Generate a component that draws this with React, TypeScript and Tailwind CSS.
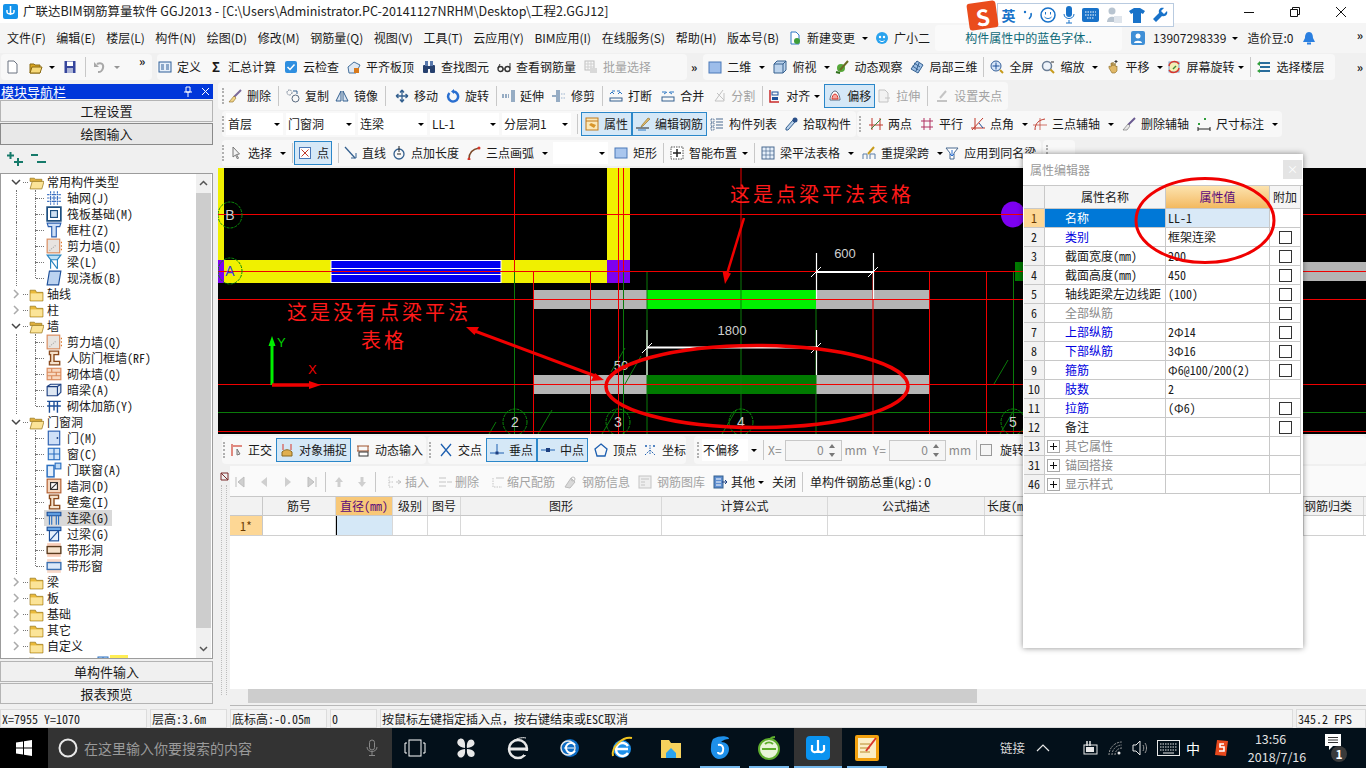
import type { ReactNode } from "react";
import clsx from "clsx";
import { twMerge } from "tailwind-merge";

const cx = (...a: Parameters<typeof clsx>) => twMerge(clsx(...a));

const ui = "[font-family:'Noto_Sans_CJK_SC','Liberation_Sans',sans-serif]";
const sim = "[font-family:'Noto_Sans_Mono_CJK_SC','Noto_Sans_CJK_SC',monospace]";

const ICONS: Record<string, ReactNode> = {
  new: <path d="M3 1h6l3 3v9H3z" fill="#fff" stroke="#6b7280" />,
  open: <><path d="M1 4h4l1 1h5v8H1z" fill="#d9a520" stroke="#8a6a14" /><path d="M3 7h10l-2 6H1z" fill="#f6d97a" stroke="#8a6a14" /></>,
  save: <><rect x="1.500" y="1" width="11" height="12" fill="#35459c" /><rect x="4" y="1.500" width="6" height="4.500" fill="#fff" /><rect x="4" y="8" width="6" height="5" fill="#aeb6d8" /></>,
  undo: <><path d="M5 4c4-2 7 0 6 4s-3 4-5 4" fill="none" stroke="#a8a8a8" strokeWidth="2" /><path d="M2 2v5h5z" fill="#a8a8a8" /></>,
  define: <><rect x="1" y="2" width="12" height="10" fill="#e7f0fa" stroke="#2f5f98" /><path d="M3 5h3M3 7h3M3 9h3M8 5h3M8 7h3M8 9h3" stroke="#2f5f98" /></>,
  cloud: <><rect x="1" y="1" width="12" height="12" rx="2" fill="#2f8fe0" /><path d="M3.500 7l2.500 2.500 4.500-5" fill="none" stroke="#fff" strokeWidth="1.500" /></>,
  flat: <><path d="M1 7l6-5 6 3-4 8H2z" fill="#dfe8f3" stroke="#44709c" /><rect x="7" y="8" width="5" height="5" fill="#d97a1c" /></>,
  binoc: <><rect x="1" y="5" width="5" height="8" rx="1" fill="#26406e" /><rect x="8" y="5" width="5" height="8" rx="1" fill="#26406e" /><rect x="3" y="1" width="3" height="5" fill="#5979ad" /><rect x="8" y="1" width="3" height="5" fill="#5979ad" /><rect x="6" y="6" width="2" height="3" fill="#26406e" /></>,
  glass: <><circle cx="3.500" cy="9" r="2.500" fill="none" stroke="#333" strokeWidth="1.400" /><circle cx="10.500" cy="9" r="2.500" fill="none" stroke="#333" strokeWidth="1.400" /><path d="M1 8l2-4M13 8V3M6 9h2" stroke="#333" /></>,
  batch: <><rect x="1" y="1" width="9" height="9" fill="none" stroke="#bdbdbd" /><path d="M1 4h9M1 7h9M4 1v9M7 1v9" stroke="#cfcfcf" /><rect x="6" y="8" width="7" height="5" fill="#d9d9d9" /></>,
  two: <rect x="1" y="2" width="12" height="11" fill="#9dbdea" stroke="#4a78b8" />,
  top: <><path d="M1 4l3-3h9v9l-3 3H1z" fill="#bcd3ec" stroke="#36618f" /><path d="M1 4h9v9M10 4l3-3" fill="none" stroke="#36618f" /></>,
  orbit: <><circle cx="6" cy="8" r="4" fill="#57a83a" /><path d="M5 10L13 1" stroke="#6a6a22" strokeWidth="2" /><path d="M1 12l4 1" stroke="#2f6f1c" strokeWidth="2" /></>,
  local: <><path d="M7 1l6 4-5 8-7-4z" fill="#9fc0e6" stroke="#34608f" /><path d="M4 3l6 4M2.500 6l6 4M9 3l-3 8" stroke="#34608f" /></>,
  full: <><circle cx="6" cy="6" r="5" fill="#d7e6f8" stroke="#345f9a" /><path d="M6 2.500v7M2.500 6h7" stroke="#1d4f99" /><path d="M10 10l3 3" stroke="#c79b1b" strokeWidth="2" /></>,
  zoom: <><circle cx="6" cy="6" r="4.500" fill="#eef3fa" stroke="#6b7e96" strokeWidth="1.500" /><path d="M9.500 9.500l3.500 3.500" stroke="#c79b1b" strokeWidth="2" /><path d="M10 2h3" stroke="#333" /></>,
  pan: <><path d="M3 8V6l2 1V3h1v3l1-4 1 4 1-3 1 4 1-1v5l-2 2H6z" fill="#e0b868" stroke="#8a6a22" strokeWidth=".6" /><path d="M10 0v3M8.500 1.500h3" stroke="#333" /></>,
  spin: <><rect x="2" y="2" width="10" height="10" fill="#f4efb5" stroke="#7fa4cf" /><path d="M2 6a5.500 5.500 0 0 1 10-2M12 8a5.500 5.500 0 0 1-10 2" fill="none" stroke="#d9362b" strokeWidth="1.500" /><path d="M6 9l3-3" stroke="#3a8a3a" strokeWidth="1.500" /></>,
  floor: <><path d="M3 3h10M3 7h10M3 11h10" stroke="#2a6d9c" strokeWidth="2" /><path d="M3 1L0 4l3 2z" fill="#2e9e3a" /><path d="M3 9l-3 2 3 2z" fill="#2e9e3a" /></>,
  broom: <><path d="M13 1L6 8" stroke="#7a6a9a" strokeWidth="2" /><path d="M6 7l2 2-3 4-4 0z" fill="#f1d488" stroke="#8a6a22" strokeWidth=".6" /></>,
  copy: <><circle cx="3.500" cy="3.500" r="2.500" fill="none" stroke="#5a6b80" strokeDasharray="1.500 1" /><circle cx="9.500" cy="9.500" r="3.500" fill="none" stroke="#5a6b80" /><path d="M7 2h4v3" fill="none" stroke="#34608f" /></>,
  mirror: <path d="M6 2v10H1zM8 2v10h5z" fill="#d9e4f1" stroke="#34608f" />,
  move: <path d="M7 1v12M1 7h12M7 1L5 3.500M7 1l2 2.500M7 13l-2-2.500M7 13l2-2.500M1 7l2.500-2M1 7l2.500 2M13 7l-2.500-2M13 7l-2.500 2" fill="none" stroke="#34608f" strokeWidth="1.300" />,
  rot: <><path d="M3.500 4a5 5 0 1 0 4-1.500" fill="none" stroke="#2a6fd0" strokeWidth="2.500" /><path d="M8 0v5L5 2.500z" fill="#2a6fd0" /></>,
  extend: <><path d="M1 6h7M1 8h7" stroke="#34608f" strokeDasharray="2 1" /><path d="M11 1v12M13 1v12" stroke="#34608f" /></>,
  trim: <><path d="M5 1v12M7 1v12" stroke="#34608f" /><path d="M0 7h4" stroke="#34608f" /><path d="M9 5h4M9 9h4" stroke="#9db4cf" strokeDasharray="1.500 1" /></>,
  brk: <><path d="M3 2h3M8 2h3" stroke="#2f78c4" /><path d="M1 5l2-2 2 2M9 5l2-2 2 2" fill="none" stroke="#2f78c4" /><rect x="1" y="9" width="12" height="3" fill="none" stroke="#34608f" /></>,
  merge: <><path d="M1 3h4M9 3h4M3 5l3-2M11 5L8 3" stroke="#2f78c4" fill="none" /><rect x="1" y="8" width="12" height="4" fill="none" stroke="#34608f" /></>,
  split: <><path d="M11 1L3 12h9V4" fill="none" stroke="#c2c2c2" /><path d="M5 4l7 7" stroke="#c2c2c2" /></>,
  align: <><path d="M3 1v12h9" fill="none" stroke="#c72a2a" strokeWidth="1.500" /><rect x="5" y="3" width="6" height="3" fill="none" stroke="#1d4f99" /><rect x="5" y="8" width="6" height="3" fill="#1d4f99" /></>,
  offset: <><path d="M7 2c3 0 5 6 5 9H2c0-3 2-9 5-9z" fill="#fff" stroke="#5a6b80" /><path d="M7 5c2 0 3 3 3 5H4c0-2 1-5 3-5z" fill="#f4a8a0" stroke="#d9362b" /></>,
  stretch: <><path d="M2 1h6l3 3v9H2z" fill="#f2f2f2" stroke="#c4c4c4" /><path d="M8 9h5" stroke="#c4c4c4" /></>,
  grip: <><path d="M11 2L5 9" stroke="#c4c4c4" strokeWidth="2" /><path d="M2 12h10" stroke="#c4c4c4" strokeWidth="2" /></>,
  prop: <><rect x="1" y="1" width="12" height="12" fill="#fbe8b8" stroke="#c27a1c" /><path d="M1 4h12" stroke="#c27a1c" /><path d="M4 8l5 3 2-3-5-2z" fill="#d9962b" /></>,
  rebar: <><path d="M12 1L6 8l-1 2 2-1 7-7z" fill="#e0b868" stroke="#8a6a22" strokeWidth=".6" /><path d="M0 11h13" stroke="#222" /><path d="M2 13h8" stroke="#2f78c4" /></>,
  list: <><path d="M1 2h3v3H1zM1 6h3v3H1zM1 10h3v3H1z" fill="none" stroke="#4a6a90" strokeDasharray="1 .6" /><path d="M6 2h7M6 5h7M6 8h7M6 11h7" stroke="#4a6a90" /></>,
  pick: <><path d="M9 3L2 11v2h2l7-8z" fill="#bcd3ec" stroke="#34608f" /><circle cx="11" cy="3" r="2.500" fill="#2a4f88" /></>,
  twop: <><path d="M3 1v12M11 1v12M0 8h14" stroke="#c0392b" /><path d="M2 12L12 2" stroke="#3a8a3a" /></>,
  para: <path d="M4 1v12M10 1v12M1 4h12M1 10h12" stroke="#b03060" />,
  angle: <><path d="M4 1v12M0 11h14M1 13L12 1" stroke="#c0392b" /><path d="M8 6l4 5" stroke="#1d4f99" /></>,
  arc3: <><path d="M2 13C2 6 6 3 12 2" fill="none" stroke="#c0392b" /><path d="M0 8h14M7 1v12" stroke="#c0392b" strokeWidth=".7" /></>,
  delaxis: <><path d="M13 1L6 8" stroke="#6a5a90" strokeWidth="2" /><path d="M6 7l2 2-3 4H1z" fill="#e8e8e8" stroke="#6a6a6a" strokeWidth=".6" /></>,
  dim: <><path d="M1 12h12M1 10v4M13 10v4" stroke="#222" /><rect x="1" y="6" width="2" height="2" fill="#2e9e3a" /><rect x="7" y="1" width="2" height="2" fill="#2e9e3a" /></>,
  select: <path d="M4 1v10l2.500-2 2 4 1-1-2-3.500 3-.5z" fill="#f2f2f2" stroke="#777" />,
  point: <><rect x="1.500" y="1.500" width="11" height="11" fill="#fff" stroke="#4a78b8" /><path d="M3.500 3.500l7 7M10.500 3.500l-7 7" stroke="#c0392b" /></>,
  line: <><path d="M2 1l10 11" stroke="#34608f" strokeWidth="1.300" /><path d="M8 12h5V7" fill="none" stroke="#34608f" /></>,
  addlen: <><circle cx="7" cy="8" r="5" fill="none" stroke="#34608f" strokeWidth="1.300" /><path d="M7 0v6M5 8h4" stroke="#222" /></>,
  arc: <><path d="M2 13C2 7 6 3 12 2" fill="none" stroke="#7c4a2a" strokeWidth="1.500" /><circle cx="12" cy="2" r="1.500" fill="#d9362b" /><circle cx="2" cy="13" r="1.500" fill="#d9362b" /></>,
  rect: <rect x="1" y="2" width="12" height="10" fill="#a9c6ee" stroke="#4a78b8" />,
  smart: <><rect x="1" y="1" width="12" height="12" fill="#fff" stroke="#555" strokeDasharray="1.500 1" /><path d="M7 3v8M3 7h8" stroke="#222" strokeWidth="1.500" /></>,
  beamtab: <><rect x="1" y="1" width="12" height="12" fill="#e7f0fa" stroke="#4a6a90" /><path d="M1 5h12M1 9h12M5 1v12M9 1v12" stroke="#4a6a90" strokeWidth=".7" /></>,
  respan: <><path d="M1 13V8h4v5M8 13V8h5v5" fill="none" stroke="#5a7fa8" /><path d="M12 1L6 8" stroke="#c79b1b" strokeWidth="2" /></>,
  same: <><path d="M1 2h12l-4 5v6H5V7z" fill="#fff" stroke="#4a6a90" /><path d="M7 4v6M5 8l2 2 2-2" fill="none" stroke="#2a6fd0" /></>,
  ortho: <><path d="M3 1v12M3 3h10" stroke="#e08a80" strokeWidth="2" /><path d="M8 6v6l3-1z" fill="#ddd" stroke="#777" /></>,
  snap: <><path d="M3 1v6M11 1v6" stroke="#d9362b" /><path d="M2 9c3-3 7-3 10 0v4H2z" fill="#e0b050" stroke="#8a6a22" /></>,
  input: <><path d="M1 3h12M1 8h12M2 3v5M12 3v5" stroke="#a0522d" /><rect x="3" y="9" width="9" height="4" fill="#fff" stroke="#333" /></>,
  cross: <path d="M2 1l10 12M12 1L2 13" stroke="#1d5fb0" strokeWidth="1.300" />,
  perp: <><path d="M0 10h14" stroke="#1d5fb0" /><path d="M7 1v9" stroke="#1d5fb0" /><rect x="5.500" y="8.500" width="3" height="3" fill="#1d3f80" /></>,
  mid: <><path d="M0 7h14" stroke="#1d5fb0" /><rect x="5" y="5" width="4" height="4" fill="#1d3f80" /></>,
  vert: <path d="M7 1l6 5-2 7H3L1 6z" fill="none" stroke="#1d5fb0" strokeWidth="1.300" />,
  coord: <><path d="M7 2v10M2 12l5-5 5 5" fill="none" stroke="#1d5fb0" strokeDasharray="1.500 1" /><circle cx="3" cy="3" r="1" fill="#1d5fb0" /><circle cx="11" cy="3" r="1" fill="#1d5fb0" /></>,
  first: <path d="M3 2v10M11 2L5 7l6 5z" fill="#cfcfcf" stroke="#bdbdbd" />,
  prev: <path d="M10 2L4 7l6 5z" fill="#cfcfcf" />,
  next: <path d="M4 2l6 5-6 5z" fill="#cfcfcf" />,
  last: <path d="M11 2v10M3 2l6 5-6 5z" fill="#cfcfcf" stroke="#bdbdbd" />,
  up: <path d="M7 2l4 5H8.500v5h-3V7H3z" fill="#cfcfcf" />,
  down: <path d="M7 12l4-5H8.500V2h-3v5H3z" fill="#cfcfcf" />,
  ins: <><path d="M1 2h5M1 7h5M1 12h5M1 2v10" stroke="#c4c4c4" strokeDasharray="1.500 1" /><path d="M8 7h5M10 5l3 2-3 2" fill="none" stroke="#c4c4c4" /></>,
  del: <path d="M1 3h7M1 7h7M1 11h7M9 7h5" stroke="#c4c4c4" />,
  scale: <><path d="M2 3v9h9" fill="none" stroke="#c4c4c4" strokeDasharray="1.500 1" /><path d="M5 3h8" stroke="#c4c4c4" /></>,
  info: <><path d="M2 12l6-9 4 4-5 6z" fill="#d9d9d9" stroke="#bcbcbc" /><circle cx="10" cy="4" r="2" fill="none" stroke="#bcbcbc" /></>,
  lib: <><rect x="1" y="1" width="12" height="12" fill="#eee" stroke="#c4c4c4" /><path d="M3 4h8M3 7h4M3 10h4" stroke="#c4c4c4" /></>,
  other: <><rect x="1" y="1" width="9" height="12" fill="#5f8ed0" stroke="#34608f" /><path d="M3 4h5M3 7h5M3 10h5" stroke="#fff" /><path d="M9 7h5l-2-2M14 7l-2 2" fill="none" stroke="#1d3f80" /></>,
  rowdoc: <><path d="M3 1h5l3 3v9H3z" fill="#fff" stroke="#2f78c4" /><circle cx="9" cy="10" r="3" fill="#3f9e3a" /></>,
  xiao: <><ellipse cx="7" cy="7" rx="6" ry="6" fill="#2aa3ee" /><circle cx="5" cy="6" r="1.200" fill="#fff" /><circle cx="9" cy="6" r="1.200" fill="#fff" /><path d="M4.500 9.500c2 1.500 3 1.500 5 0" fill="none" stroke="#fff" /></>,
  user: <><rect x="0" y="0" width="14" height="14" rx="2" fill="#3f8fd6" /><circle cx="7" cy="5" r="2.500" fill="#fff" /><path d="M3 12c0-3 8-3 8 0z" fill="#fff" /></>,
  bell: <><path d="M7 1c3 0 4 3 4 6l2 4H1l2-4c0-3 1-6 4-6z" fill="#2a7fe0" /><rect x="5" y="11.500" width="4" height="2" fill="#2a7fe0" /></>,
  fold: <><path d="M1 3h5l1 2h6v8H1z" fill="#e9b93a" stroke="#9a7a20" strokeWidth=".7" /><path d="M1.500 6h11v6.500h-11z" fill="#fbe498" /></>,
  foldo: <><path d="M1 3h4l1 1h6v2H1z" fill="#e0b040" stroke="#9a7a20" strokeWidth=".7" /><path d="M3 6h11l-2 7H1z" fill="#fbe498" stroke="#9a7a20" strokeWidth=".7" /></>,
  axisnet: <path d="M1 4h12M1 7h12M1 10h12M4 1v12M7 1v12M10 1v12" stroke="#3b6fc0" strokeDasharray="1.600 .5" />,
  raft: <><rect x="1" y="1" width="12" height="12" fill="#fff" stroke="#1d4f80" strokeWidth="1.500" /><rect x="4" y="4" width="6" height="6" fill="#cfe0f2" stroke="#1d4f80" /></>,
  col: <path d="M1 1h12l-1 3H9v9H5V4H2z" fill="#cfe0f7" stroke="#2a5fb0" />,
  wall: <><rect x="1" y="1" width="11" height="12" fill="#e8e4e0" stroke="#d98a5a" /><path d="M13 4h1M13 7h1M13 10h1" stroke="#d9782a" strokeWidth="1.400" /><path d="M3 11l6-5" stroke="#aaa" strokeDasharray="1 1" /></>,
  beam: <><path d="M1 1h12l-3 4H4z" fill="#bfe0f5" stroke="#2a85c0" /><path d="M4 5v8M10 5v8M4 5l6 8" stroke="#2a85c0" /></>,
  slab: <path d="M3 1h10l-2 12H1z" fill="#bcd3f0" stroke="#1d4f99" />,
  doorw: <path d="M3 1h8v3H7v6h5v3H3V10h1V4H3z" fill="#f5e2cc" stroke="#8a4a1c" strokeWidth="1.200" />,
  brick: <><rect x="1" y="2" width="12" height="10" fill="#f8d8c0" stroke="#d9895a" /><path d="M1 5.500h12M1 8.500h12M5 2v3.500M9 5.500v3M5 8.500V12" stroke="#d9895a" /></>,
  dark: <><path d="M1 4l3-2h9v7l-3 3H1z" fill="#dfe8f3" stroke="#1d3f80" /><path d="M1 4h9v8M10 4l3-2" fill="none" stroke="#1d3f80" /></>,
  wallbar: <path d="M1 3h12M3 3v10M10 3v10M1 7h12M7 3v8" fill="none" stroke="#1d4f99" strokeWidth="1.200" />,
  door: <><rect x="2" y="1" width="10" height="12" fill="#cfe0f7" stroke="#2a5fb0" /><circle cx="10" cy="7" r=".8" fill="#1d3f80" /></>,
  win: <><rect x="2" y="2" width="10" height="10" fill="#cfe4f9" stroke="#2a6fc0" /><path d="M7 2v10M2 7h10" stroke="#2a6fc0" /></>,
  doorwin: <><rect x="1" y="3" width="6" height="10" fill="#e6f0fb" stroke="#2a6fc0" strokeWidth="1.300" /><rect x="8" y="1" width="5" height="5" fill="#bcd8f5" stroke="#2a6fc0" /></>,
  hole: <><rect x="1" y="1" width="12" height="12" fill="#f5d8c0" stroke="#b05a2a" /><rect x="4" y="4" width="6" height="6" fill="#fff" stroke="#333" /><path d="M4 10l6-6" stroke="#333" /></>,
  link: <><path d="M1 2h12v3H1z" fill="#5f9de0" stroke="#1d4f99" /><path d="M3 5v8M5 5v8M9 5v8M11 5v8" stroke="#2a6fc0" /></>,
  lintel: <><rect x="1" y="1" width="12" height="3" fill="#6aa8e8" stroke="#1d4f99" /><rect x="3" y="4" width="8" height="9" fill="#e6f0fb" stroke="#1d4f99" /><path d="M3 13l8-9" stroke="#1d4f99" /></>,
  band: <><rect x="1" y="1" width="12" height="12" fill="#f8cdb8" /><rect x="1" y="4" width="12" height="6" fill="#f5e2cc" stroke="#5a3a1c" strokeWidth="1.200" /></>,
  bandw: <><rect x="1" y="1" width="12" height="12" fill="#f8d8c8" /><rect x="1" y="4" width="12" height="6" fill="#dbe8f8" stroke="#3a6fb0" strokeWidth="1.200" /></>,
};

function Icon({ name, size = 14 }: { name: string; size?: number }) {
  return (
    <svg width={size} height={size} viewBox="0 0 14 14" className="shrink-0">
      {ICONS[name]}
    </svg>
  );
}

function Caret({ className }: { className?: string }) {
  return <span className={cx("h-0 w-0 shrink-0 border-x-[3px] border-t-[3px] border-x-transparent border-t-black", className)} />;
}

function Sep({ className }: { className?: string }) {
  return <span className={cx("mx-[-2px] h-[20px] w-px shrink-0 bg-[#c8c8c8]", className)} />;
}

function Handle({ className }: { className?: string }) {
  return <span className={cx("h-[16px] shrink-0 border-l-2 border-dotted border-[#b0b0b0]", className)} />;
}

function Tool({ icon, label, muted, active, className }: { icon: string; label?: string; muted?: boolean; active?: boolean; className?: string }) {
  return (
    <div
      className={cx(
        "flex shrink-0 items-center gap-[5px] whitespace-nowrap",
        muted && "text-[#a3a3a3]",
        active && "h-[24px] border border-[#2b87c9] bg-[#d5e8f7] px-[3px]",
        className,
      )}
    >
      <Icon name={icon} />
      {label && <span>{label}</span>}
    </div>
  );
}

function Band({ children, className }: { children: ReactNode; className?: string }) {
  return <div className={cx("flex h-[26px] shrink-0 items-center gap-2 rounded-sm bg-[#f8f8f8]", className)}>{children}</div>;
}

function Combo({ text, className }: { text?: string; className?: string }) {
  return (
    <div className={cx("flex h-[22px] shrink-0 items-center justify-between bg-white pl-[2px] pr-[3px]", className)}>
      <span>{text}</span>
      <Caret />
    </div>
  );
}

function More({ className }: { className?: string }) {
  return <span className={cx("shrink-0 self-start text-[12px] font-bold leading-[14px]", className)}>»</span>;
}

function TitleBar() {
  return (
    <div className="flex h-[23px] shrink-0 items-center bg-white pl-[3px] text-[12.5px] text-[#222]">
      <svg width="15" height="15" viewBox="0 0 15 15" className="mr-[5px] shrink-0">
        <rect width="15" height="15" rx="2" fill="#1593ea" />
        <path d="M7.500 2v9M4 6v2a2 2 0 0 0 3.500 1M11 6v2a2 2 0 0 1-3.500 1" fill="none" stroke="#fff" strokeWidth="1.500" />
      </svg>
      <span className="whitespace-nowrap">广联达BIM钢筋算量软件 GGJ2013 - [C:\Users\Administrator.PC-20141127NRHM\Desktop\工程2.GGJ12]</span>
      <div className="ml-auto mr-[2px] flex items-center">
        <svg width="46" height="20" viewBox="0 0 46 20"><path d="M18 10.500h10" stroke="#111" /></svg>
        <svg width="46" height="20" viewBox="0 0 46 20"><path d="M18.500 7.500h7v7h-7zM20.500 7.500v-2h7v7h-2" fill="none" stroke="#111" /></svg>
        <svg width="46" height="20" viewBox="0 0 46 20"><path d="M18 5l10 10M28 5L18 15" stroke="#111" /></svg>
      </div>
    </div>
  );
}

function MenuBar() {
  const menus = ["文件(F)", "编辑(E)", "楼层(L)", "构件(N)", "绘图(D)", "修改(M)", "钢筋量(Q)", "视图(V)", "工具(T)", "云应用(Y)", "BIM应用(I)", "在线服务(S)", "帮助(H)", "版本号(B)"];
  return (
    <div className="flex h-[30px] shrink-0 items-center bg-[#f5f5f5] pl-[7px]">
      <div className="flex gap-[10.6px]">
        {menus.map((m) => (
          <span key={m} className="whitespace-nowrap">{m}</span>
        ))}
      </div>
      <Tool icon="rowdoc" label="新建变更" className="ml-[9px]" />
      <Caret className="ml-[7px]" />
      <Tool icon="xiao" label="广小二" className="ml-[7px]" />
      <div className="ml-[5px] flex h-[26px] w-[187px] shrink-0 items-center justify-center rounded-sm bg-[#fafafa] text-[#0e6a78]">构件属性中的蓝色字体..</div>
      <Tool icon="user" label="13907298339" className="ml-[9px] gap-[8px]" />
      <Caret className="ml-[6px]" />
      <span className="ml-[9px] whitespace-nowrap">造价豆:0</span>
      <span className="ml-[9px]"><Icon name="bell" /></span>
      <More className="ml-auto mr-[3px] mt-[5px]" />
    </div>
  );
}

function MainToolbar() {
  return (
    <div className="flex h-[28px] shrink-0 items-center pl-[1px]">
      <Band className="w-[151px] gap-0 pl-[4px]">
        <Icon name="new" />
        <span className="ml-[10px]"><Icon name="open" /></span>
        <Caret className="ml-[6px]" />
        <span className="ml-[8px]"><Icon name="save" /></span>
        <span className="ml-[8px] h-[20px] w-px bg-[#c8c8c8]" />
        <span className="ml-[6px]"><Icon name="undo" /></span>
        <Caret className="ml-[8px] opacity-40" />
        <More className="ml-[19px]" />
      </Band>
      <Band className="ml-[5px] w-[530px] pl-[1px]">
        <Tool icon="define" label="定义" />
        <div className="flex shrink-0 items-center gap-[5px]"><b className="w-[14px] text-center text-[13px]">Σ</b><span>汇总计算</span></div>
        <Tool icon="cloud" label="云检查" />
        <Tool icon="flat" label="平齐板顶" />
        <Tool icon="binoc" label="查找图元" />
        <Tool icon="glass" label="查看钢筋量" />
        <Tool icon="batch" label="批量选择" muted />
      </Band>
      <More className="ml-[4px] mt-[7px]" />
      <Band className="ml-[6px] w-[632px] pl-[5px]">
        <Tool icon="two" label="二维" />
        <Caret />
        <Tool icon="top" label="俯视" />
        <Caret />
        <Tool icon="orbit" label="动态观察" className="-ml-[3px]" />
        <Tool icon="local" label="局部三维" />
        <Sep />
        <Tool icon="full" label="全屏" />
        <Tool icon="zoom" label="缩放" />
        <Caret />
        <Tool icon="pan" label="平移" />
        <Caret />
        <Tool icon="spin" label="屏幕旋转" className="-ml-[4px]" />
        <Caret className="-ml-[4px]" />
        <Sep />
        <Tool icon="floor" label="选择楼层" />
      </Band>
      <More className="ml-auto mr-[3px] mt-[7px]" />
    </div>
  );
}

const TREE: { t: string; i?: string; k: "open" | "closed" | "leaf"; last?: boolean; on?: boolean }[] = [
  { t: "常用构件类型", k: "open" },
  { t: "轴网(J)", i: "axisnet", k: "leaf" },
  { t: "筏板基础(M)", i: "raft", k: "leaf" },
  { t: "框柱(Z)", i: "col", k: "leaf" },
  { t: "剪力墙(Q)", i: "wall", k: "leaf" },
  { t: "梁(L)", i: "beam", k: "leaf" },
  { t: "现浇板(B)", i: "slab", k: "leaf", last: true },
  { t: "轴线", k: "closed" },
  { t: "柱", k: "closed" },
  { t: "墙", k: "open" },
  { t: "剪力墙(Q)", i: "wall", k: "leaf" },
  { t: "人防门框墙(RF)", i: "doorw", k: "leaf" },
  { t: "砌体墙(Q)", i: "brick", k: "leaf" },
  { t: "暗梁(A)", i: "dark", k: "leaf" },
  { t: "砌体加筋(Y)", i: "wallbar", k: "leaf", last: true },
  { t: "门窗洞", k: "open" },
  { t: "门(M)", i: "door", k: "leaf" },
  { t: "窗(C)", i: "win", k: "leaf" },
  { t: "门联窗(A)", i: "doorwin", k: "leaf" },
  { t: "墙洞(D)", i: "hole", k: "leaf" },
  { t: "壁龛(I)", i: "doorw", k: "leaf" },
  { t: "连梁(G)", i: "link", k: "leaf", on: true },
  { t: "过梁(G)", i: "lintel", k: "leaf" },
  { t: "带形洞", i: "band", k: "leaf" },
  { t: "带形窗", i: "bandw", k: "leaf", last: true },
  { t: "梁", k: "closed" },
  { t: "板", k: "closed" },
  { t: "基础", k: "closed" },
  { t: "其它", k: "closed" },
  { t: "自定义", k: "closed" },
];

function TreeRow({ row }: { row: (typeof TREE)[number] }) {
  if (row.k === "leaf") {
    return (
      <div className="relative flex h-4 items-center pl-[43px]">
        <span className="absolute inset-y-0 left-[15px] border-l border-dotted border-[#777]" />
        <span className="absolute left-[34px] top-0 h-2 border-l border-dotted border-[#777]" />
        {!row.last && <span className="absolute bottom-0 left-[34px] h-2 border-l border-dotted border-[#777]" />}
        <span className="absolute left-[35px] top-2 w-[8px] border-t border-dotted border-[#777]" />
        <div className={cx("relative flex h-4 items-center pl-[2px] pr-[3px]", row.on && "bg-[#d9d9d9]")}>
          <Icon name={row.i!} size={16} />
          <span className="ml-[5px] whitespace-nowrap leading-4">{row.t}</span>
        </div>
      </div>
    );
  }
  return (
    <div className="relative flex h-4 items-center pl-[10px]">
      <svg width="10" height="10" viewBox="0 0 10 10" className="shrink-0">
        {row.k === "open" ? <path d="M1 3l4 4 4-4" fill="none" stroke="#444" strokeWidth="1.500" /> : <path d="M3 1l4 4-4 4" fill="none" stroke="#aaa" strokeWidth="1.500" />}
      </svg>
      <span className="ml-[2px] w-[5px] border-t border-dotted border-[#777]" />
      <span className="ml-[1px]"><Icon name={row.k === "open" ? "foldo" : "fold"} size={15} /></span>
      <span className="ml-[3px] whitespace-nowrap leading-4">{row.t}</span>
    </div>
  );
}

function PanelButton({ children, pressed, className }: { children: ReactNode; pressed?: boolean; className?: string }) {
  return (
    <div
      className={cx(
        "flex h-[22px] shrink-0 items-center justify-center border border-[#b4b4b4] bg-[#f0f0f0] text-[13px]",
        pressed && "border-[#8a8a8a] bg-[#e8e8e8]",
        className,
      )}
    >
      {children}
    </div>
  );
}

function LeftPanel() {
  return (
    <div className="flex w-[213px] shrink-0 flex-col gap-px pt-[3px]">
      <div className="flex h-[15px] shrink-0 items-center justify-between bg-[#0037da] pl-px pr-[3px] text-[13px] text-white">
        <span>模块导航栏</span>
        <span className="flex items-center gap-[8px]">
          <svg width="10" height="11" viewBox="0 0 10 11"><path d="M3 1h4v5H3zM1 6h8M5 6v5" fill="none" stroke="#fff" /></svg>
          <svg width="9" height="9" viewBox="0 0 9 9"><path d="M1 1l7 7M8 1L1 8" stroke="#fff" /></svg>
        </span>
      </div>
      <PanelButton>工程设置</PanelButton>
      <PanelButton pressed>绘图输入</PanelButton>
      <div className="flex h-[26px] shrink-0 items-center gap-[6px] pl-[7px]">
        <svg width="17" height="16" viewBox="0 0 17 16"><path d="M3.500 1v7M0 4.500h7M11 7v8M7 11h9" stroke="#167a6a" strokeWidth="2" fill="none" /></svg>
        <svg width="17" height="16" viewBox="0 0 17 16"><path d="M1 4h7M7 11h9" stroke="#167a6a" strokeWidth="2" /></svg>
      </div>
      <div className={cx("relative h-[486px] shrink-0 overflow-hidden border border-[#9c9c9c] bg-white pr-[19px]", sim)}>
        {TREE.map((row, idx) => (
          <TreeRow key={idx} row={row} />
        ))}
        <div className="flex h-4 items-start pl-[27px] pt-[1px]">
          <Icon name="fold" size={15} />
          <span className="ml-[53px]"><Icon name="win" /></span>
          <span className="h-3 w-[18px] bg-[#ffee55]" />
        </div>
        <div className="absolute inset-y-0 right-[1px] flex w-[15px] flex-col items-center bg-[#f0f0f0]">
          <svg width="15" height="19" viewBox="0 0 15 19"><path d="M4 11l3.500-3.500L11 11" fill="none" stroke="#555" strokeWidth="1.500" /></svg>
          <div className="h-[436px] w-full bg-[#cdcdcd]" />
          <svg width="15" height="30" viewBox="0 0 15 30"><path d="M4 19l3.500 3.500L11 19" fill="none" stroke="#555" strokeWidth="1.500" /></svg>
        </div>
      </div>
      <div className="mt-[1px] flex flex-col gap-px">
        <PanelButton className="h-[21px]">单构件输入</PanelButton>
        <PanelButton className="h-[21px]">报表预览</PanelButton>
      </div>
    </div>
  );
}

function EditRow() {
  const sep = "mx-[-1px]";
  return (
    <Band className="h-[28px] w-[790px] pl-[4px]">
      <Handle />
      <Tool icon="broom" label="删除" className="-ml-[4px]" />
      <Sep className={sep} />
      <Tool icon="copy" label="复制" />
      <Tool icon="mirror" label="镜像" className="-ml-[2px]" />
      <Sep className={sep} />
      <Tool icon="move" label="移动" className="ml-[2px]" />
      <Tool icon="rot" label="旋转" />
      <Sep className={sep} />
      <Tool icon="extend" label="延伸" className="-ml-[3px]" />
      <Tool icon="trim" label="修剪" />
      <Sep className={sep} />
      <Tool icon="brk" label="打断" className="-ml-[1px]" />
      <Tool icon="merge" label="合并" className="ml-[1px]" />
      <Tool icon="split" label="分割" muted />
      <Sep className={sep} />
      <Tool icon="align" label="对齐" className="-ml-[3px]" />
      <Caret className="-ml-[4px]" />
      <Tool icon="offset" label="偏移" active className="-ml-[4px]" />
      <Tool icon="stretch" label="拉伸" muted className="-ml-[6px]" />
      <Sep className={sep} />
      <Tool icon="grip" label="设置夹点" muted />
    </Band>
  );
}

function LayerRow() {
  return (
    <div className="flex h-[28px] shrink-0 items-center">
      <Band className="ml-[4px] w-[634px] gap-[3px] pl-0">
        <Handle className="-mr-[1px]" />
        <Combo text="首层" className="w-[57px]" />
        <Combo text="门窗洞" className="w-[69px]" />
        <Combo text="连梁" className="w-[69px]" />
        <Combo text="LL-1" className="w-[69px]" />
        <Combo text="分层洞1" className="w-[69px]" />
        <span className="ml-[3px] h-[20px] w-px bg-[#c8c8c8]" />
        <Tool icon="prop" label="属性" active />
        <Tool icon="rebar" label="编辑钢筋" active className="-ml-[3px]" />
        <Tool icon="list" label="构件列表" />
        <Tool icon="pick" label="拾取构件" className="ml-[4px]" />
      </Band>
      <Band className="ml-[1px] w-[425px] pl-[2px]">
        <Handle />
        <Tool icon="twop" label="两点" />
        <Tool icon="para" label="平行" />
        <Tool icon="angle" label="点角" />
        <Caret />
        <Tool icon="arc3" label="三点辅轴" className="-ml-[3px]" />
        <Caret />
        <Tool icon="delaxis" label="删除辅轴" />
        <Tool icon="dim" label="尺寸标注" />
        <Caret />
      </Band>
    </div>
  );
}

function DrawRow() {
  return (
    <div className="mt-px flex h-[28px] shrink-0 items-center">
      <Band className="ml-[4px] w-[819px] pl-0">
        <Handle />
        <Tool icon="select" label="选择" className="-ml-[3px]" />
        <Caret />
        <Sep />
        <Tool icon="point" label="点" active className="-ml-[5px] w-[38px] pl-[3px]" />
        <Sep />
        <Tool icon="line" label="直线" className="-ml-[2px]" />
        <Tool icon="addlen" label="点加长度" className="-ml-[2px]" />
        <Tool icon="arc" label="三点画弧" />
        <Caret />
        <Combo className="-ml-[3px] w-[55px]" />
        <Tool icon="rect" label="矩形" className="-ml-[2px]" />
        <Sep />
        <Tool icon="smart" label="智能布置" />
        <Caret className="-ml-[3px]" />
        <Sep />
        <Tool icon="beamtab" label="梁平法表格" />
        <Caret />
        <Tool icon="respan" label="重提梁跨" />
        <Caret />
        <Tool icon="same" label="应用到同名梁" className="-ml-[6px]" />
      </Band>
      <Band className="ml-[2px] w-[32px] pl-[3px]"><Handle /></Band>
    </div>
  );
}

function AxisMark({ x, y, t, fill = "#cfcfcf" }: { x: number; y: number; t: string; fill?: string }) {
  return (
    <g>
      <ellipse cx={x} cy={y} rx="12" ry="13" fill="none" stroke="#0a8a0a" strokeDasharray="3 1" />
      <text x={x} y={y + 5} textAnchor="middle" fontSize="14" fill={fill} fontFamily="Liberation Sans">{t}</text>
    </g>
  );
}

function CadCanvas() {
  const red = "#f00000";
  const green = "#0a7a0a";
  return (
    <div className="h-[266px] shrink-0 overflow-hidden bg-black">
      <svg width="1148" height="266" viewBox="218 168 1148 266" className="block">
        <path d="M218 168h6v92h-6zM607 168h23v92h-23zM224 260h383v23H224z" fill="#f0f000" />
        <rect x="607" y="260" width="23" height="23" fill="#7d00f0" />
        <rect x="218" y="260" width="6" height="23" fill="#7d00f0" />
        <rect x="331" y="260.500" width="170" height="22" fill="#0000f0" stroke="#fff" />
        <path d="M331 268.500h170M331 274.500h170" stroke="#fff" />
        <rect x="534" y="290" width="395" height="19" fill="#b4b4b4" />
        <rect x="534" y="375" width="395" height="19" fill="#b4b4b4" />
        <rect x="1300" y="262" width="66" height="19" fill="#b4b4b4" />
        <rect x="647" y="290" width="169" height="19" fill="#00f000" />
        <rect x="647" y="375" width="169" height="19" fill="#007a00" />
        <rect x="1015" y="262" width="10" height="19" fill="#007a00" />
        <ellipse cx="1013" cy="214.500" rx="12" ry="13" fill="#7d00f0" />
        <path d="M218 412.500h1148M514.500 272v162M623.500 272v162M741 272v162M816 309v125M647 272v162M1013.500 272v162" stroke={green} fill="none" />
        <path d="M538 434l14-24M489 434l7-12M602 434l14-24M625 384l16-28M611 372l14-24M722 434l14-24M1000 434l14-24M994 384l14-24" stroke={green} fill="none" />
        <path d="M218 214.500h1148M218 271.500h1148M218 299.500h1148M218 384.500h1148M218 431.500h1148" stroke={red} fill="none" />
        <path d="M514.500 168v104M618.500 168v266M623.500 168v104M741 168v104M533.500 272v162M590.500 272v162M873 272v162M929.500 272v162M986.500 272v162M816.500 272v18" stroke={red} fill="none" />
        <path d="M816.500 253v46M873.500 253v46M647 330v45M816.500 330v45" stroke="#fff" fill="none" strokeWidth="1.200" />
        <path d="M817 272h56M647 347.500h169" stroke="#fff" strokeWidth="2" fill="none" />
        <path d="M811 277l10-10M868 277l10-10M642 353l10-10M811 353l10-10" stroke="#fff" fill="none" />
        <AxisMark x={230} y={215} t="B" />
        <AxisMark x={230} y={271} t="A" fill="#3a3ae0" />
        <AxisMark x={515} y={422} t="2" />
        <AxisMark x={618} y={422} t="3" />
        <AxisMark x={741} y={422} t="4" />
        <AxisMark x={1013} y={422} t="5" />
        <g fontFamily="Liberation Sans" fontSize="13" fill="#cfcfcf" textAnchor="middle">
          <text x="845" y="258">600</text>
          <text x="732" y="335">1800</text>
          <text x="621" y="370">50</text>
        </g>
        <path d="M272 385v-40" stroke="#00f000" strokeWidth="3" />
        <path d="M272 336l-3.500 10h7z" fill="#00f000" />
        <path d="M272 385h40" stroke={red} strokeWidth="3.500" />
        <path d="M321 385l-12-4v8z" fill={red} />
        <text x="277" y="347" fontSize="13" fill="#00d000" fontFamily="Liberation Sans">Y</text>
        <text x="308" y="374" fontSize="13" fill={red} fontFamily="Liberation Sans">X</text>
        <ellipse cx="757" cy="386.500" rx="151" ry="41" fill="none" stroke={red} strokeWidth="3.500" />
        <path d="M744 218l-17 56" stroke={red} strokeWidth="2.500" />
        <path d="M725 284l-2.500-13 8.500 2.500z" fill={red} />
        <path d="M472 330l126 47" stroke={red} strokeWidth="3" />
        <path d="M466 327l13 0-4.500 8zM604 380l-13 1 4-8z" fill={red} />
        <g fontFamily="Noto Sans CJK SC" fontSize="20" fill="#ff1a1a">
          <text x="730" y="202" letterSpacing="3">这是点梁平法表格</text>
          <text x="287" y="320" letterSpacing="3">这是没有点梁平法</text>
          <text x="361" y="348" letterSpacing="3">表格</text>
        </g>
      </svg>
    </div>
  );
}

function Spin({ className }: { className?: string }) {
  return (
    <div className={cx("flex h-[21px] w-[57px] shrink-0 items-center justify-end border border-[#c8c8c8] bg-[#f5f5f5] text-[#8a8a8a]", className)}>
      <span>0</span>
      <svg width="17" height="19" viewBox="0 0 17 19"><path d="M8 3l3 4H5zM8 16l3-4H5z" fill="#777" /></svg>
    </div>
  );
}

function SnapBar() {
  return (
    <div className="flex h-[32px] shrink-0 items-center pl-[4px]">
      <Band className="h-[28px] w-[204px] gap-[6px] pl-[1px]">
        <Handle />
        <Tool icon="ortho" label="正交" className="-ml-[2px]" />
        <Tool icon="snap" label="对象捕捉" active className="-ml-[2px]" />
        <Tool icon="input" label="动态输入" className="-ml-[1px]" />
      </Band>
      <Band className="ml-[2px] h-[28px] w-[258px] gap-[6px] pl-[1px]">
        <Handle />
        <Tool icon="cross" label="交点" className="ml-[2px]" />
        <Tool icon="perp" label="垂点" active className="-ml-[2px]" />
        <Tool icon="mid" label="中点" active className="-ml-[6px]" />
        <Tool icon="vert" label="顶点" />
        <Tool icon="coord" label="坐标" />
      </Band>
      <Band className="ml-[8px] h-[28px] grow gap-0 pl-[3px]">
        <Handle />
        <div className="ml-[3px] flex h-[22px] w-[46px] items-center bg-white pl-px">不偏移</div>
        <Caret className="ml-[3px]" />
        <span className="ml-[6px] h-[20px] w-px bg-[#c8c8c8]" />
        <span className="ml-[4px] text-[#8a8a8a]">X=</span>
        <Spin className="ml-[3px]" />
        <span className="ml-[3px] text-[#8a8a8a]">mm</span>
        <span className="ml-[6px] text-[#8a8a8a]">Y=</span>
        <Spin className="ml-[3px]" />
        <span className="ml-[3px] text-[#8a8a8a]">mm</span>
        <span className="ml-[5px] h-[20px] w-px bg-[#c8c8c8]" />
        <span className="ml-[3px] h-[12px] w-[12px] border border-[#999] bg-[#f5f5f5]" />
        <span className="ml-[8px]">旋转</span>
      </Band>
    </div>
  );
}

function RebarBar() {
  return (
    <div className="flex h-[30px] shrink-0 items-center gap-2 bg-[#fafafa] pl-[3px] pt-[2px]">
      <div className="flex items-center gap-[10px]">
        <Tool icon="first" muted />
        <Tool icon="prev" muted />
        <Tool icon="next" muted />
        <Tool icon="last" muted />
      </div>
      <Sep />
      <div className="flex items-center gap-[9px]">
        <Tool icon="up" muted />
        <Tool icon="down" muted />
      </div>
      <Sep />
      <Tool icon="ins" label="插入" muted className="ml-[6px] gap-[3px]" />
      <Tool icon="del" label="删除" muted className="ml-[1px] gap-[3px]" />
      <Tool icon="scale" label="缩尺配筋" muted className="ml-[4px] gap-[2px]" />
      <Tool icon="info" label="钢筋信息" muted />
      <Tool icon="lib" label="钢筋图库" muted />
      <Tool icon="other" label="其他" className="gap-[4px]" />
      <Caret className="-ml-[5px]" />
      <span className="shrink-0">关闭</span>
      <Sep />
      <span className="ml-[1px] shrink-0 whitespace-nowrap">单构件钢筋总重(kg) : 0</span>
    </div>
  );
}

const COLS = [
  { t: "筋号", w: "w-[73px]" },
  { t: "直径(mm)", w: "w-[57px]", on: true },
  { t: "级别", w: "w-[35px]" },
  { t: "图号", w: "w-[33px]" },
  { t: "图形", w: "w-[201px]" },
  { t: "计算公式", w: "w-[166px]" },
  { t: "公式描述", w: "w-[157px]" },
  { t: "长度(mm)", w: "w-[319px]" },
  { t: "钢筋归类", w: "w-[60px]" },
];

function RebarTable() {
  return (
    <div className={cx("h-[193px] shrink-0 overflow-hidden bg-white", sim)}>
      <div className="flex h-[20px] border-b border-t border-[#c8c8c8] bg-[#f2f2f2]">
        <div className="w-[33px] shrink-0 border-r border-[#c8c8c8]" />
        {COLS.map((c) => (
          <div key={c.t} className={cx("flex shrink-0 items-center justify-center overflow-hidden border-r border-[#d8d8d8]", c.w, c.on && "bg-[#f8c878] text-[#5a0a7a]", c.t === "钢筋归类" && "justify-start", c.t === "长度(mm)" && "justify-start pl-[2px]")}>
            {c.t}
          </div>
        ))}
      </div>
      <div className="flex h-[20px] border-b border-[#d0d0d0]">
        <div className="flex w-[33px] shrink-0 items-center justify-center border-r border-[#c8c8c8] bg-[#fdd795] text-[#6a3a00]">1*</div>
        {COLS.map((c) => (
          <div key={c.t} className={cx("shrink-0 border-r border-[#d8d8d8]", c.w, c.on && "border-l border-l-black bg-[#d5e8f7]")} />
        ))}
      </div>
    </div>
  );
}

function RebarPanel() {
  return (
    <div className="flex min-h-0 grow">
      <div className="flex w-[12px] shrink-0 flex-col items-center gap-[2px] pt-[6px]">
        <svg width="9" height="9" viewBox="0 0 9 9"><path d="M1 1h7v7H1zM1 1l7 7" fill="#eee" stroke="#7a2a2a" /></svg>
        <span className="mt-[2px] h-[210px] w-[6px] border-x border-dotted border-[#bcbcbc]" />
      </div>
      <div className="flex min-w-0 grow flex-col">
        <RebarBar />
        <RebarTable />
        <div className="flex h-[14px] shrink-0 items-center bg-[#f0f0f0] pl-[18px]">
          <div className="h-[14px] w-[729px] bg-[#cdcdcd]" />
        </div>
        <div className="mt-[2px] h-px bg-[#b8b8b8]" />
      </div>
    </div>
  );
}

function StatusBar() {
  const cells = [
    { t: "X=7955 Y=1070", w: "w-[147px]" },
    { t: "层高:3.6m", w: "w-[77px]" },
    { t: "底标高:-0.05m", w: "w-[97px]" },
    { t: "0", w: "w-[47px]" },
    { t: "按鼠标左键指定插入点，按右键结束或ESC取消", w: "w-[913px]" },
    { t: "345.2 FPS", w: "w-[70px]" },
  ];
  return (
    <div className={cx("flex h-[20px] shrink-0 items-center gap-[3px] pt-px", sim)}>
      {cells.map((c) => (
        <div key={c.t} className={cx("flex h-[19px] shrink-0 items-center whitespace-nowrap border border-[#dcdcdc] bg-[#f4f4f4] pl-px", c.w)}>{c.t}</div>
      ))}
    </div>
  );
}

function Tray({ children, on, line, className }: { children: ReactNode; on?: boolean; line?: boolean; className?: string }) {
  return (
    <div className={cx("relative ml-px flex h-10 w-[48px] shrink-0 items-center justify-center", on && "bg-[#333]", className)}>
      {children}
      {line && <span className={cx("absolute inset-x-[4px] bottom-0 h-[2px] bg-[#76b9ed]", on && "inset-x-0")} />}
    </div>
  );
}

function Taskbar() {
  return (
    <div className="flex h-10 shrink-0 items-center bg-[#03101a] text-white">
      <div className="flex h-10 w-[48px] shrink-0 items-center justify-center bg-black">
        <svg width="16" height="16" viewBox="0 0 16 16"><path d="M0 2.500l7-1v6H0zM8 1.300l8-1.300v7.500H8zM0 8.500h7v6l-7-1zM8 8.500h8V16l-8-1.300z" fill="#fff" /></svg>
      </div>
      <div className="flex h-10 w-[344px] shrink-0 items-center bg-[#333] pl-[10px] pr-[14px] text-[14px] text-[#9a9a9a]">
        <svg width="20" height="20" viewBox="0 0 20 20"><circle cx="10" cy="10" r="8.500" fill="none" stroke="#e8e8e8" strokeWidth="2" /></svg>
        <span className="ml-[6px]">在这里输入你要搜索的内容</span>
        <svg width="12" height="18" viewBox="0 0 12 18" className="ml-auto"><rect x="3.500" y="1" width="5" height="10" rx="2.500" fill="none" stroke="#8a8a8a" /><path d="M1 8c0 6 10 6 10 0M6 13v3M3 16.500h6" fill="none" stroke="#8a8a8a" /></svg>
      </div>
      <div className="flex w-[46px] shrink-0 justify-center">
        <svg width="22" height="18" viewBox="0 0 22 18"><rect x="5" y="1" width="12" height="16" fill="none" stroke="#fff" /><path d="M3 4H1v10h2M19 4h2v10h-2" fill="none" stroke="#fff" /></svg>
      </div>
      <Tray className="ml-[4px]"><svg width="22" height="22" viewBox="0 0 22 22"><path d="M10 11C3 10 1 6 3 3c3-3 8-2 7 8zM12 11c-1-7 3-10 6-8 3 3 2 7-6 8zM12 12c7 0 9 4 7 7-3 2-8 1-7-7zM10 12c1 7-3 10-6 8-3-3-2-7 6-8z" fill="#e8e8e8" /></svg></Tray>
      <Tray className="ml-[4px]"><svg width="22" height="24" viewBox="0 0 22 24"><ellipse cx="11" cy="13" rx="9" ry="9" fill="none" stroke="#e8e8e8" strokeWidth="2.500" /><path d="M3 13h16" stroke="#e8e8e8" strokeWidth="3" /><path d="M3 8C8 2 15 1 19 2" fill="none" stroke="#e8e8e8" /><rect x="17" y="15" width="5" height="4" fill="#03101a" /></svg></Tray>
      <Tray className="ml-[4px]"><svg width="24" height="22" viewBox="0 0 24 22"><circle cx="12" cy="11" r="9" fill="#0d6cc4" /><circle cx="10" cy="11" r="7" fill="none" stroke="#e8e8e8" strokeWidth="1.500" /><path d="M6 11h10" stroke="#fff" /><path d="M17 8a5 5 0 1 0 0 6" fill="none" stroke="#fff" strokeWidth="2" /></svg></Tray>
      <Tray className="ml-[4px]"><svg width="26" height="26" viewBox="0 0 26 26"><ellipse cx="13" cy="14" rx="9" ry="9" fill="#1e90ea" /><path d="M7 14h12M19 11a6.500 6.500 0 1 0 0 7" fill="none" stroke="#fff" strokeWidth="2.500" /><path d="M4 21C2 12 14 1 23 3" fill="none" stroke="#f2c521" strokeWidth="2" /></svg></Tray>
      <Tray><svg width="22" height="22" viewBox="0 0 22 22"><path d="M1 3h8l2 3h10v15H1z" fill="#f6d25d" /><path d="M6 16l5-5 5 5v5H6z" fill="#2aa3ee" /></svg></Tray>
      <Tray line><svg width="24" height="26" viewBox="0 0 24 26"><path d="M5 4C12 0 21 1 21 4c-3 0-6 1-8 3 5 0 8 3 8 7 0 6-5 10-10 10S2 18 3 12c0-4 1-6 2-8z" fill="#1e90ea" /><path d="M10 10c4-1 6 2 5 6s-5 3-5 1" fill="none" stroke="#fff" strokeWidth="2" /></svg></Tray>
      <Tray line><svg width="22" height="26" viewBox="0 0 22 26"><circle cx="11" cy="14" r="10" fill="#e8f5d8" stroke="#5fae2e" strokeWidth="2" /><path d="M4 14h14" stroke="#5fae2e" strokeWidth="2" /><path d="M7 9a6 6 0 0 1 8 0" fill="none" stroke="#5fae2e" strokeWidth="2" /><path d="M12 4c2-2 4-2 5-2" stroke="#5fae2e" strokeWidth="2" /></svg></Tray>
      <Tray on line><svg width="24" height="24" viewBox="0 0 24 24"><rect width="24" height="24" rx="4" fill="#0a93f0" /><path d="M12 4v13M6 9v3a3 3 0 0 0 6 2M18 9v3a3 3 0 0 1-6 2" fill="none" stroke="#fff" strokeWidth="2.200" /></svg></Tray>
      <Tray line><svg width="24" height="26" viewBox="0 0 24 26"><rect x="0" y="0" width="24" height="26" rx="2" fill="#f2a10f" /><rect x="3" y="3" width="18" height="20" fill="#fbeec6" /><path d="M5 9h10M5 13h10M5 17h10" stroke="#b88a2a" /><path d="M21 3L11 16" stroke="#d9362b" strokeWidth="2" /></svg></Tray>
      <div className="ml-[109px] flex items-center text-[12.5px] text-[#d8d8d8]">
        <span>链接</span>
        <svg width="14" height="8" viewBox="0 0 14 8" className="ml-[11px]"><path d="M1 7l6-6 6 6" fill="none" stroke="#e8e8e8" strokeWidth="1.200" /></svg>
      </div>
      <div className="ml-[33px] flex items-center gap-[9px]">
        <svg width="16" height="14" viewBox="0 0 16 14"><rect x="1" y="4" width="13" height="9" fill="none" stroke="#e8e8e8" /><rect x="3" y="6" width="8" height="5" fill="#e8e8e8" /><path d="M4 0v5M7 0v5" stroke="#e8e8e8" strokeWidth="1.500" /></svg>
        <svg width="15" height="15" viewBox="0 0 15 15"><path d="M1 14a13 13 0 0 1 13-13M4 14a10 10 0 0 1 10-10M7 14a7 7 0 0 1 7-7" fill="none" stroke="#9a9a9a" strokeDasharray="2 1" /><circle cx="11" cy="12" r="1.500" fill="#e8e8e8" /></svg>
        <svg width="16" height="16" viewBox="0 0 16 16"><path d="M1 5h3l4-4v14l-4-4H1z" fill="none" stroke="#e8e8e8" /><path d="M11 5c1 2 1 4 0 6M13 3c2 3 2 7 0 10" fill="none" stroke="#9a9a9a" /></svg>
        <svg width="23" height="16" viewBox="0 0 23 16"><rect x=".5" y=".5" width="22" height="15" fill="none" stroke="#e8e8e8" /><path d="M3 4h17M3 7h17M3 10h17" stroke="#e8e8e8" strokeDasharray="1.500 1" /><path d="M6 13h11" stroke="#e8e8e8" /></svg>
      </div>
      <span className="ml-[6px] text-[14px]">中</span>
      <svg width="15" height="18" viewBox="0 0 15 18" className="ml-[14px]"><path d="M3 1l11 1-2 15L1 16z" fill="#e8491d" /><path d="M10 5H6v3h4v4H5" fill="none" stroke="#fff" strokeWidth="1.600" /></svg>
      <div className="ml-[18px] flex w-[60px] flex-col items-center text-[12.5px] leading-[18px] text-[#e2e2e2]">
        <span className="ml-[-13px]">13:56</span>
        <span className="whitespace-nowrap">2018/7/16</span>
      </div>
      <div className="relative ml-[18px] h-8 w-7">
        <svg width="16" height="16" viewBox="0 0 16 16" className="absolute left-0 top-[2px]"><path d="M0 0h16v12H8l-4 4v-4H0z" fill="#fff" /><path d="M3 3.500h10M3 6h10M3 8.500h10" stroke="#333" /></svg>
        <span className="absolute left-[6px] top-[14px] flex h-[16px] w-[16px] items-center justify-center rounded-full bg-[#3a3a3a] text-[12px] font-bold leading-none">1</span>
      </div>
    </div>
  );
}

function Sogou() {
  return (
    <div className="absolute left-[968px] top-[3px] flex h-[24px] items-start">
      <div className="relative z-10 -mt-[1px] flex h-[27px] w-[29px] -rotate-[8deg] items-center justify-center rounded-[3px] bg-[#ea4c1c] text-[22px] font-bold leading-none text-white">S</div>
      <div className="flex h-[24px] w-[177px] items-center justify-around border border-[#b9cbe0] bg-white pr-[2px] text-[#1872c9]">
        <b className="text-[14px]">英</b>
        <svg width="10" height="14" viewBox="0 0 10 14"><circle cx="2" cy="4" r="1.200" fill="#1872c9" /><path d="M8 5c1 3-1 5-2 6" fill="none" stroke="#1872c9" strokeWidth="1.500" /></svg>
        <svg width="16" height="16" viewBox="0 0 16 16"><circle cx="8" cy="8" r="7" fill="none" stroke="#1872c9" strokeWidth="1.500" /><path d="M5.500 5v2.500M10.500 5v2.500M4.500 10c2 2 5 2 7 0" stroke="#1872c9" fill="none" /></svg>
        <svg width="12" height="18" viewBox="0 0 12 18"><rect x="3" y="0" width="6" height="11" rx="3" fill="#1872c9" /><path d="M1 8c0 6 10 6 10 0M6 14v3M3 17h6" fill="none" stroke="#1872c9" /></svg>
        <svg width="17" height="14" viewBox="0 0 17 14"><rect width="17" height="14" rx="2" fill="#1872c9" /><path d="M3 4h11M3 7h11M5 10h7" stroke="#fff" strokeDasharray="1.500 1" /></svg>
        <svg width="16" height="17" viewBox="0 0 16 17"><circle cx="6" cy="4" r="3.500" fill="#b8c4d0" /><path d="M1 15c0-7 10-7 10 0z" fill="#b8c4d0" /><rect x="8" y="9" width="8" height="7" fill="#dfe5ec" /></svg>
        <svg width="16" height="15" viewBox="0 0 16 15"><path d="M5 0h6l5 3-2 3-2-1v10H4V5L2 6 0 3z" fill="#1872c9" /></svg>
        <svg width="16" height="16" viewBox="0 0 16 16"><path d="M15 4l-3 3-3-3 3-3c-3-1-6 1-5 5L1 12l3 3 6-6c4 1 6-2 5-5z" fill="#1872c9" /></svg>
      </div>
    </div>
  );
}

const PROPS: { n: string; c?: string; v?: string; box?: boolean; plus?: boolean; idx: string }[] = [
  { idx: "1", n: "名称", v: "LL-1" },
  { idx: "2", n: "类别", c: "text-[#0000e0]", v: "框架连梁", box: true },
  { idx: "3", n: "截面宽度(mm)", v: "200", box: true },
  { idx: "4", n: "截面高度(mm)", v: "450", box: true },
  { idx: "5", n: "轴线距梁左边线距", v: "(100)", box: true },
  { idx: "6", n: "全部纵筋", c: "text-[#8a8a8a]", box: true },
  { idx: "7", n: "上部纵筋", c: "text-[#0000e0]", v: "2Φ14", box: true },
  { idx: "8", n: "下部纵筋", c: "text-[#0000e0]", v: "3Φ16", box: true },
  { idx: "9", n: "箍筋", c: "text-[#0000e0]", v: "Φ6@100/200(2)", box: true },
  { idx: "10", n: "肢数", c: "text-[#0000e0]", v: "2" },
  { idx: "11", n: "拉筋", c: "text-[#0000e0]", v: "(Φ6)", box: true },
  { idx: "12", n: "备注", box: true },
  { idx: "13", n: "其它属性", c: "text-[#8a8a8a]", plus: true },
  { idx: "31", n: "锚固搭接", c: "text-[#8a8a8a]", plus: true },
  { idx: "46", n: "显示样式", c: "text-[#8a8a8a]", plus: true },
];

function PropertyEditor() {
  const cell = "flex h-[19px] items-center border-b border-r border-[#c8c8c8]";
  return (
    <div className={cx("absolute left-[1023px] top-[154px] h-[494px] w-[280px] bg-white shadow-[0_0_6px_rgba(0,0,0,0.45)]", sim)}>
      <div className="flex h-[31px] items-center justify-between pl-[7px] pr-px">
        <span className="text-[#9a9a9a]">属性编辑器</span>
        <span className="flex h-[19px] w-[19px] items-center justify-center bg-[#e4e4e4] text-[11px] leading-none text-white">×</span>
      </div>
      <div className="grid grid-cols-[21px_121px_104px_31px] border-t border-[#c8c8c8] pl-px">
        <div className="h-[23px] border-b border-r border-[#c8c8c8] bg-[#f2f2f2]" />
        <div className="flex h-[23px] items-center justify-center border-b border-r border-[#c8c8c8] bg-[#f5f5f5]">属性名称</div>
        <div className="flex h-[23px] items-center justify-center border-b border-r border-[#c8c8c8] bg-gradient-to-b from-[#fce3ae] to-[#f3b95f] text-[#5a0a7a]">属性值</div>
        <div className="flex h-[23px] items-center justify-center border-b border-r border-[#c8c8c8] bg-[#f5f5f5]">附加</div>
        {PROPS.map((p) => (
          <div key={p.idx} className="contents">
            <div className={cx(cell, "justify-center", p.idx === "1" ? "bg-[#fdd795] text-[#6a3a00]" : "bg-[#f2f2f2]")}>{p.idx}</div>
            <div className={cx(cell, p.idx === "1" ? "bg-[#0078d7] text-white" : p.c, p.plus ? "pl-[2px]" : "pl-[20px]")}>
              {p.plus && (
                <svg width="13" height="13" viewBox="0 0 13 13" className="mr-[5px] shrink-0"><rect x=".5" y=".5" width="12" height="12" fill="#fff" stroke="#a8a8a8" /><path d="M3 6.500h7M6.500 3v7" stroke="#111" /></svg>
              )}
              <span className="whitespace-nowrap">{p.n}</span>
            </div>
            <div className={cx(cell, "whitespace-pre pl-[2px]", p.idx === "1" && "bg-[#d9e9f7]")}>{p.v}</div>
            <div className={cx(cell, "justify-center")}>
              {p.box && <span className="h-[13px] w-[13px] border border-[#333] bg-white" />}
            </div>
          </div>
        ))}
      </div>
      <svg width="290" height="100" viewBox="0 0 290 100" className="absolute left-[105px] top-[22px] overflow-visible">
        <ellipse cx="77" cy="44.500" rx="69" ry="42" fill="none" stroke="#f00000" strokeWidth="3" />
      </svg>
    </div>
  );
}

export default function App() {
  return (
    <div className={cx("relative flex h-[768px] w-[1366px] flex-col overflow-hidden bg-[#f0f0f0] text-[12px] text-[#1a1a1a]", ui)}>
      <TitleBar />
      <MenuBar />
      <MainToolbar />
      <div className="flex h-[627px] shrink-0">
        <LeftPanel />
        <div className="ml-[5px] flex min-w-0 grow flex-col pt-[1px]">
          <EditRow />
          <LayerRow />
          <DrawRow />
          <div className="mt-px"><CadCanvas /></div>
          <SnapBar />
          <RebarPanel />
        </div>
      </div>
      <StatusBar />
      <Taskbar />
      <Sogou />
      <PropertyEditor />
    </div>
  );
}
